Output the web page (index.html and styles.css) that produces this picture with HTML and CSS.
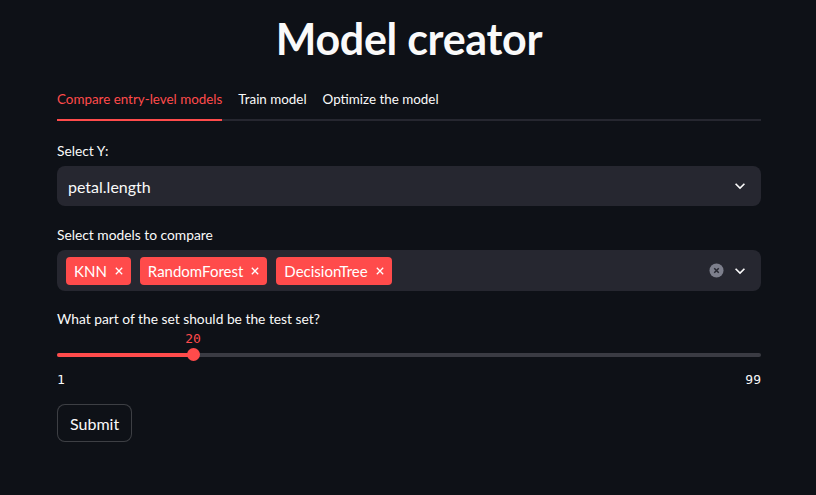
FILE: index.html
```html
<!DOCTYPE html>
<html>
<head>
<meta charset="utf-8">
<link rel="stylesheet" href="styles.css">
</head>
<body>
<main class="app">
  <h1 class="title">Model creator</h1>
  <div class="tabs">
    <div class="tab active">Compare entry-level models</div>
    <div class="tab">Train model</div>
    <div class="tab">Optimize the model</div>
  </div>
  <div class="content">
    <div class="field">
      <label class="label">Select Y:</label>
      <div class="select">
        <span class="value">petal.length</span>
        <svg class="chev" viewBox="0 0 24 24" width="20" height="20"><path d="M7.41 8.59L12 13.17l4.59-4.58L18 10l-6 6-6-6 1.41-1.41z" fill="#fafafa"/></svg>
      </div>
    </div>
    <div class="field second">
      <label class="label">Select models to compare</label>
      <div class="select multi">
        <div class="tags">
          <span class="tag">KNN <svg class="x" viewBox="0 0 10 10" width="8" height="8"><path d="M1 1L9 9M9 1L1 9" stroke="#fff" stroke-width="1.6"/></svg></span>
          <span class="tag">RandomForest <svg class="x" viewBox="0 0 10 10" width="8" height="8"><path d="M1 1L9 9M9 1L1 9" stroke="#fff" stroke-width="1.6"/></svg></span>
          <span class="tag">DecisionTree <svg class="x" viewBox="0 0 10 10" width="8" height="8"><path d="M1 1L9 9M9 1L1 9" stroke="#fff" stroke-width="1.6"/></svg></span>
        </div>
        <div class="icons">
          <svg class="clear" viewBox="0 0 16 16" width="15" height="15"><circle cx="8" cy="8" r="7.5" fill="#7d7f8c"/><path d="M5.6 5.6L10.4 10.4M10.4 5.6L5.6 10.4" stroke="#262730" stroke-width="1.6"/></svg>
          <svg class="chev" viewBox="0 0 24 24" width="20" height="20"><path d="M7.41 8.59L12 13.17l4.59-4.58L18 10l-6 6-6-6 1.41-1.41z" fill="#fafafa"/></svg>
        </div>
      </div>
    </div>
    <div class="field slider-field">
      <label class="label">What part of the set should be the test set?</label>
      <div class="slider">
        <div class="track">
          <div class="fill" style="width: 19.39%"></div>
          <div class="thumb" style="left: 19.39%"><span class="thumb-val">20</span></div>
        </div>
        <div class="ticks"><span>1</span><span>99</span></div>
      </div>
    </div>
    <div class="actions">
      <button class="btn">Submit</button>
    </div>
  </div>
</main>
</body>
</html>
```

FILE: styles.css
```css
* { box-sizing: border-box; }
html, body { margin: 0; padding: 0; }
body {
  background: #0e1117;
  color: #fafafa;
  font-family: "Source Sans Pro", "Lato", "Noto Sans", sans-serif;
  width: 816px;
  height: 495px;
  overflow: hidden;
}
.app {
  padding: 0 55px 0 57px;
  display: flex;
  flex-direction: column;
}
.title {
  margin: 0;
  padding-top: 13px;
  font-size: 43px;
  font-weight: 700;
  line-height: 52px;
  text-align: center;
  letter-spacing: -0.3px;
}
.tabs {
  margin-top: 24px;
  display: flex;
  gap: 16px;
  border-bottom: 2px solid #262730;
}
.tab {
  font-size: 13.4px;
  line-height: 20px;
  padding-bottom: 10px;
  margin-bottom: -2px;
  border-bottom: 2px solid transparent;
  white-space: nowrap;
}
.tab.active {
  color: #ff4b4b;
  border-bottom-color: #ff4b4b;
}
.content {
  display: flex;
  flex-direction: column;
  gap: 18px;
  padding-top: 20px;
}
.field { display: flex; flex-direction: column; }
.field.second { margin-top: 1px; }
.label {
  font-size: 13.8px;
  line-height: 20px;
  margin-bottom: 5px;
}
.select {
  height: 40px;
  background: #262730;
  border-radius: 8px;
  display: flex;
  align-items: center;
  justify-content: space-between;
  padding: 0 11px 0 11px;
}
.select .value { font-size: 16px; }
.chev { display: block; }
.multi { height: 41px; padding-left: 9px; }
.tags { display: flex; gap: 9px; }
.tag {
  background: #ff4b4b;
  color: #fff;
  border-radius: 4px;
  height: 28px;
  display: inline-flex;
  align-items: center;
  gap: 8px;
  padding: 0 8px 0 8px;
  font-size: 15px;
}
.x { display: block; }
.icons { display: flex; align-items: center; gap: 6px; }
.clear { display: block; }
.slider-field .label { margin-bottom: 0; }
.slider { padding-top: 24px; }
.track {
  position: relative;
  height: 4px;
  background: #3a3b43;
  border-radius: 2px;
}
.fill {
  height: 4px;
  background: #ff4b4b;
  border-radius: 2px;
}
.thumb {
  position: absolute;
  top: -5px;
  width: 13px;
  height: 13px;
  margin-left: -7px;
  border-radius: 50%;
  background: #ff4b4b;
}
.thumb-val {
  position: absolute;
  bottom: 15px;
  left: 50%;
  transform: translateX(-50%);
  font-family: "DejaVu Sans Mono", "Liberation Mono", monospace;
  font-size: 13px;
  color: #ff4b4b;
}
.ticks {
  display: flex;
  justify-content: space-between;
  font-family: "DejaVu Sans Mono", "Liberation Mono", monospace;
  font-size: 13px;
  margin-top: 15px;
  line-height: 16px;
}
.actions { margin-top: -2px; }
.btn {
  background: #0e1117;
  color: #fafafa;
  border: 1px solid rgba(250,250,250,0.2);
  border-radius: 8px;
  font-family: inherit;
  font-size: 16px;
  height: 38px;
  padding: 0 12px;
}
```
